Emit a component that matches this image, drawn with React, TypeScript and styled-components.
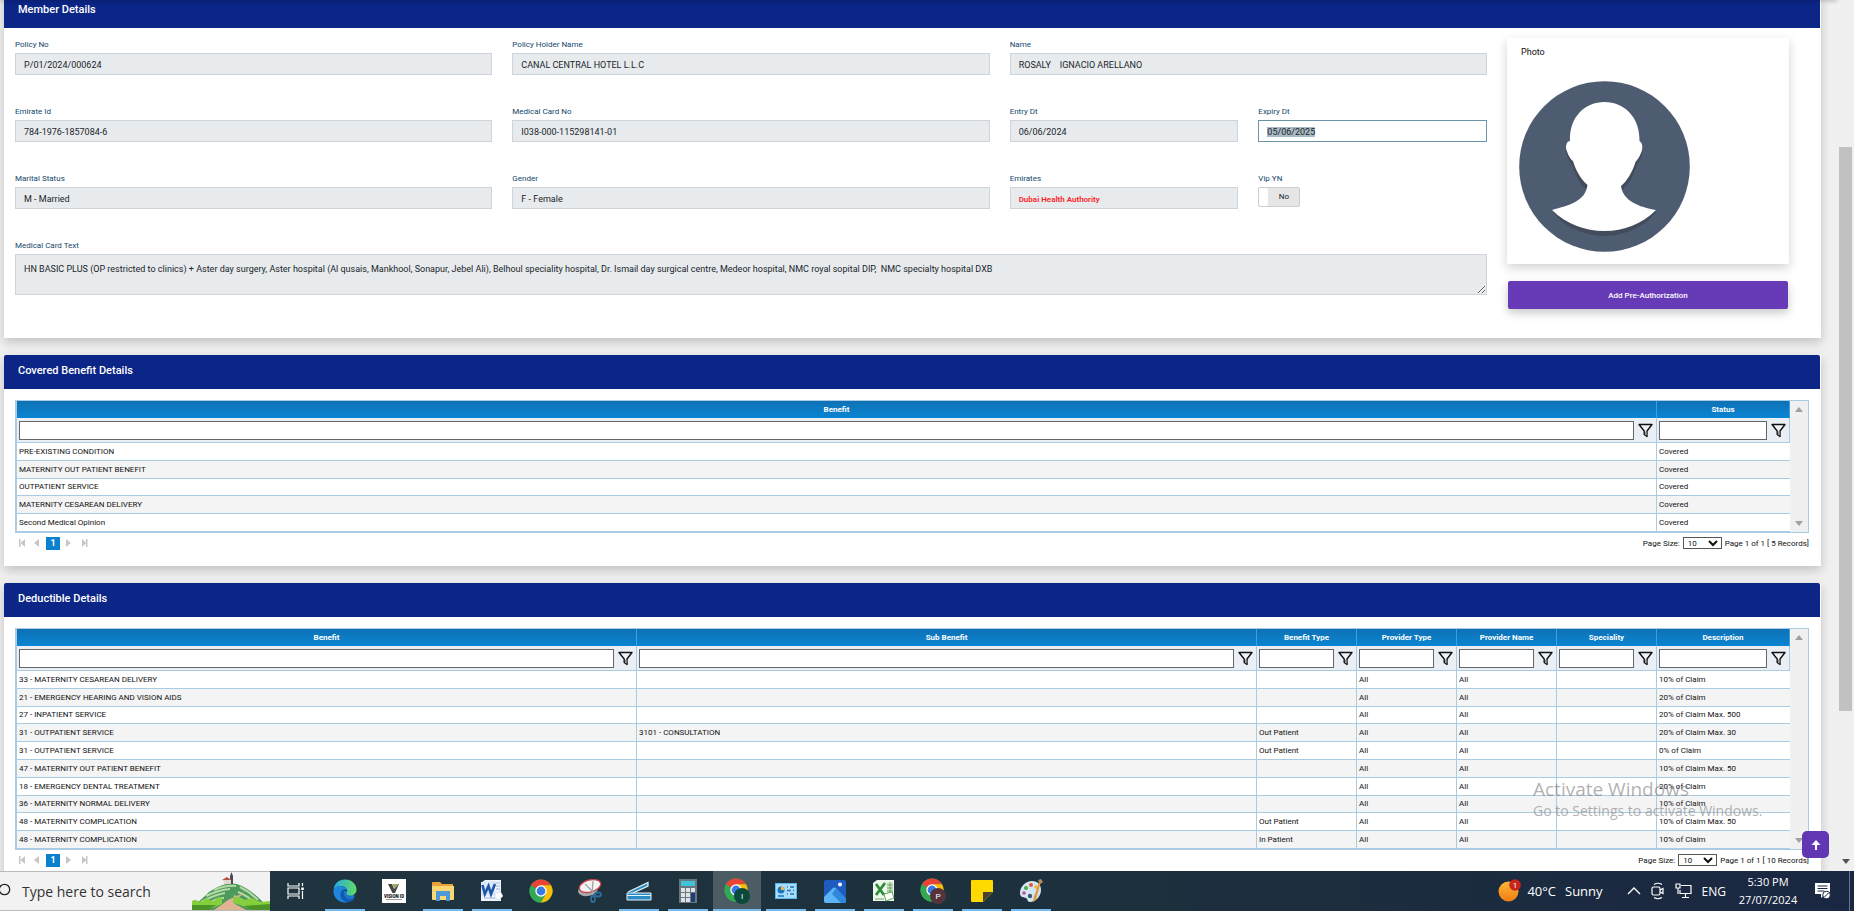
import React, { useEffect, useRef } from "react";
import styled, { createGlobalStyle, css } from "styled-components";

const GlobalStyle = createGlobalStyle`
  *, *::before, *::after { box-sizing: border-box; }
  body { margin: 0; font-family: Roboto, "Liberation Sans", sans-serif; color: #212529; }
  button, input, select, textarea { font: inherit; color: inherit; margin: 0; }
`;

const Desktop = styled.div`
  display: flex;
  flex-direction: column;
  height: 100vh;
  overflow: hidden;
`;

const Browser = styled.div`
  position: relative;
  display: flex;
  flex: 1;
  min-height: 0;
  background: #f0f0f0;
`;

const TopShade = styled.div`
  position: absolute;
  top: -4px;
  left: 0;
  right: 17px;
  height: 4px;
  box-shadow: 0 1px 4px rgba(0, 0, 0, 0.25);
`;

const Content = styled.main`
  flex: 1;
  min-width: 0;
  overflow: hidden;
  padding: 0 16px 0 4px;
`;

/* The page is scrolled, so the first card starts just above the window edge. */
const Cards = styled.div`
  display: flex;
  flex-direction: column;
  gap: 17px;
  margin-top: -6px;
`;

const Card = styled.section`
  background: #fff;
  box-shadow: 0 4px 10px rgba(0, 0, 0, 0.2);
`;

const CardTitle = styled.h2`
  display: flex;
  align-items: center;
  height: 34px;
  margin: 0 1px 0 0;
  padding: 0 14px 4px;
  border-radius: 2px 2px 0 0;
  background: #0c2687;
  color: #fff;
  font-size: 11px;
  font-weight: 500;
`;

const MemberBody = styled.div`
  display: flex;
  gap: 20px;
  padding: 9px 32px 29px 11px;
`;

const Form = styled.form`
  flex: 1;
  display: grid;
  grid-template-columns: repeat(6, 1fr);
  gap: 29px 20px;
  align-content: start;
`;

const FieldBox = styled.div<{ $span: number }>`
  grid-column: span ${(p) => p.$span};
  min-width: 0;
`;

const Label = styled.label`
  display: block;
  height: 16px;
  font-size: 8px;
  line-height: 16px;
  color: #13476b;
`;

const fieldLook = css`
  display: block;
  width: 100%;
  border: 1px solid #ced4da;
  border-radius: 0;
  background: #e7ebee;
  padding: 2px 8px 0;
  font-size: 9px;
  outline: none;
`;

const Input = styled.input<{ $alert?: boolean; $current?: boolean }>`
  ${fieldLook}
  height: 22px;
  ${(p) => p.$alert && css`color: #f22; font-weight: 600; font-size: 8px;`}
  ${(p) => p.$current && css`border-color: #6a93a8; background: #fff;`}
  &::selection { background: #a9bac4; color: #212529; }
`;

const TextArea = styled.textarea`
  ${fieldLook}
  height: 41px;
  padding-top: 8px;
  line-height: 12px;
  resize: vertical;
`;

const Toggle = styled.label`
  display: flex;
  width: 42px;
  height: 20px;
  border: 1px solid #ccc;
  border-radius: 2px;
  background: #e6e6e6;
  font-size: 8px;
  line-height: 18px;
  text-align: center;
`;

const ToggleInput = styled.input`
  appearance: none;
  width: 9px;
  height: 18px;
  border-radius: 2px;
  background: #fff;
`;

const ToggleText = styled.span`
  flex: 1;
`;

const Side = styled.aside`
  width: 282px;
  padding-top: 1px;
`;

const PhotoCard = styled.figure`
  height: 226px;
  margin: 0;
  padding: 7px 12px;
  background: #fff;
  box-shadow: 0 4px 10px rgba(0, 0, 0, 0.18);
`;

const PhotoCaption = styled.figcaption`
  padding-left: 2px;
  height: 36px;
  font-size: 9px;
  line-height: 14px;
  color: #111;
`;

const AddButton = styled.button`
  display: block;
  width: 280px;
  height: 28px;
  margin: 17px auto 0;
  border: 0;
  border-radius: 2px;
  background: #673ab7;
  color: #fff;
  font-size: 8px;
  font-weight: 500;
  box-shadow: 0 4px 10px rgba(0, 0, 0, 0.22);
`;

const GridBody = styled.div`
  padding: 11px 12px 13px 11px;
`;

const GridFrame = styled.div`
  display: flex;
  border: 1px solid #a9cbe4;
  border-left-width: 2px;
`;

const TableArea = styled.div`
  flex: 1;
  min-width: 0;
`;

const Table = styled.table<{ $height: number }>`
  width: 100%;
  height: ${(p) => p.$height}px;
  table-layout: fixed;
  border-collapse: separate;
  border-spacing: 0;
  font-size: 8px;
  line-height: 14px;
  color: #111;
`;

const Head = styled.th`
  height: 17px;
  padding: 0;
  border-right: 1px solid #3ba0e0;
  background: linear-gradient(#0f71b4, #0985d3);
  color: #fff;
  font-weight: 700;
`;

const FilterCell = styled.td`
  height: 25px;
  padding: 0;
  border-right: 1px solid #a9cbe4;
  border-bottom: 1px solid #a9cbe4;
  background: #e9eff5;
`;

const FilterBox = styled.div`
  display: flex;
  align-items: center;
  gap: 4px;
  padding: 0 3px 0 2px;
`;

const FilterInput = styled.input`
  flex: 1;
  min-width: 0;
  height: 19px;
  border: 1px solid #666;
  background: #fff;
`;

const IconButton = styled.button`
  display: flex;
  padding: 0;
  border: 0;
  background: none;
`;

const Cell = styled.td`
  padding: 1px 0 0 2px;
  border-right: 1px solid #a9cbe4;
  border-bottom: 1px solid #a9cbe4;
  white-space: nowrap;
  overflow: hidden;
  &:last-child { border-right: 0; }
`;

const Row = styled.tr`
  &:nth-child(even) { background: #f4f4f4; }
`;

const InnerScroll = styled.div`
  display: flex;
  flex-direction: column;
  justify-content: space-between;
  align-items: center;
  width: 18px;
  padding: 6px 0;
  background: #f0f0f0;
`;

const Pager = styled.div`
  display: flex;
  align-items: center;
  justify-content: space-between;
  height: 20px;
  font-size: 8px;
  color: #111;
`;

const PagerNav = styled.nav`
  display: flex;
  align-items: center;
  gap: 5px;
  padding-left: 3px;
`;

const PageNumber = styled.button`
  width: 14px;
  height: 13px;
  padding: 0;
  border: 0;
  background: #0a80ce;
  color: #fff;
  font-size: 9px;
  font-weight: 700;
  line-height: 13px;
`;

const PagerInfo = styled.div`
  display: flex;
  align-items: center;
  gap: 3px;
`;

const PageSize = styled.select`
  width: 39px;
  height: 12px;
  padding: 0;
  border: 1px solid #555;
  border-radius: 0;
  background: #fff;
  font-size: 8px;
`;

const PageScroll = styled.div`
  display: flex;
  flex-direction: column;
  align-items: center;
  width: 17px;
  background: #f0f0f0;
  padding-bottom: 7px;
`;

const ScrollGap = styled.div<{ $grow: number }>`
  flex: ${(p) => p.$grow};
`;

const Thumb = styled.div`
  flex: 564;
  width: 13px;
  background: #c1c1c1;
`;

const ToTop = styled.button`
  position: absolute;
  right: 25px;
  bottom: 13px;
  display: flex;
  align-items: center;
  justify-content: center;
  width: 27px;
  height: 27px;
  padding: 0;
  border: 0;
  border-radius: 5px;
  background: #6237b4;
`;

const Watermark = styled.div`
  position: absolute;
  right: 85px;
  bottom: 49px;
  width: 236px;
  font-family: "Open Sans", "Noto Sans", sans-serif;
  color: rgba(125, 125, 125, 0.6);
  font-size: 14px;
  line-height: 22px;
  white-space: nowrap;
  pointer-events: none;
`;

const WatermarkTitle = styled.div`
  font-size: 19px;
`;

const Taskbar = styled.footer`
  display: flex;
  height: 40px;
  background: linear-gradient(90deg, #20363f, #1d303d 60%, #1a2742);
  font-family: "Open Sans", "Noto Sans", sans-serif;
  color: #fff;
`;

const Search = styled.div`
  display: flex;
  align-items: center;
  width: 270px;
  border-top: 1px solid #bbb;
  border-bottom: 1px solid #bbb;
  background: #f2f2f2;
`;

const SearchInput = styled.input`
  flex: 1;
  min-width: 0;
  padding: 0 0 0 11px;
  border: 0;
  background: none;
  font-size: 14px;
  &::placeholder { color: #333; opacity: 1; }
`;

const Apps = styled.div`
  display: flex;
  gap: 1px;
  padding-left: 2px;
`;

const AppButton = styled.button<{ $open?: boolean; $active?: boolean }>`
  display: flex;
  align-items: center;
  justify-content: center;
  width: 48px;
  height: 40px;
  padding: 0;
  border: 0;
  background:
    ${(p) => (p.$open ? `linear-gradient(#76b9ed, #76b9ed) center bottom / ${p.$active ? 48 : 40}px 2px no-repeat` : "none")}
    ${(p) => (p.$active ? ", #4b5c64" : "")};
`;

const Tray = styled.div`
  display: flex;
  align-items: center;
  gap: 10px;
  margin-left: auto;
  padding-right: 4px;
  font-size: 12px;
`;

const Weather = styled.div`
  display: flex;
  align-items: center;
  gap: 5px;
  margin-right: 14px;
  font-size: 13px;
`;

const Conditions = styled.span`
  display: flex;
  gap: 9px;
`;

const Clock = styled.time`
  width: 60px;
  margin: 0 6px 0 2px;
  font-size: 11px;
  line-height: 18px;
  text-align: center;
`;

const ShowDesktop = styled.div`
  width: 1px;
  height: 40px;
  margin-left: 8px;
  background: #6d7688;
`;

/* ---------- drawings ---------- */

const Funnel = () => (
  <svg width="15" height="15" viewBox="0 0 15 15">
    <path d="M1 1.5h13L9 8v5.5L6.2 11.5V8z" fill="#eef3f7" stroke="#111" strokeWidth="1.4" strokeLinejoin="round" />
    <path d="M7 8.5h1.5v4.2L7 11.6z" fill="#999" />
  </svg>
);

const Arrow = ({ down, color = "#a0a0a0" }: { down?: boolean; color?: string }) => (
  <svg width="8" height="5" viewBox="0 0 8 5">
    <path d={down ? "M0 0h8L4 5z" : "M0 5h8L4 0z"} fill={color} />
  </svg>
);

const Step = ({ d }: { d: string }) => (
  <svg width="9" height="8" viewBox="0 0 9 8">
    <path d={d} fill="#c6c6c6" />
  </svg>
);

const Avatar = () => (
  <svg width="171" height="171" viewBox="0 0 171 171" display="block">
    <circle cx="85.5" cy="85.5" r="85.3" fill="#4d5c71" />
    <path
      d="M47 66C46 74 50 79 53 84C57 96 62 105 68 109L103 109C110 103 115 94 118 84C122 78 125 72 123 64zM33 129C40 142 62 155 85.5 155C109 155 131 142 138 129z"
      fill="#434c5c"
    />
    <path
      d="M51 60C50 36 66 21 85.5 21C105 21 121 36 120.5 60C124 62 124 68 122 72C120 77 118 79 116.5 81C113 92 108 100 102 105C104 120 120 126 137 129C123 143 105 150 85.5 150C66 150 47 143 33 129C50 124 66 121 68.5 104C62 98 57 90 54 80C52 79 49 74 47.5 69C46 65 48 60 51 60z"
      fill="#fff"
    />
  </svg>
);

const UpArrow = () => (
  <svg width="10" height="12" viewBox="0 0 10 12">
    <path d="M5 11V4" stroke="#fff" strokeWidth="2" />
    <path d="M.5 6L5 1l4.5 5z" fill="#fff" />
  </svg>
);

const SearchIcon = () => (
  <svg width="11" height="18" viewBox="0 0 11 18">
    <circle cx="4.5" cy="7.5" r="5.2" fill="none" stroke="#222" strokeWidth="1.3" />
  </svg>
);

const Landscape = () => (
  <svg width="78" height="38" viewBox="0 0 78 38">
    <path d="M5 31Q12 25 17 20Q26 14 34 12Q42 10 50 14Q62 20 72 31L76 38H4z" fill="#4e9a5d" />
    <path
      d="M9 30Q22 23 33 21M14 24Q26 18 38 17M22 18Q34 13 44 14M16 32Q24 26 32 26M48 15Q58 20 66 28M46 20Q56 24 63 31M42 24Q50 27 56 33"
      stroke="#b5d9a6" strokeWidth="2" fill="none"
    />
    <path d="M50 18C55 21 44 24 36 28C31 32 26 35 22 38H54C46 33 38 31 43 27C49 24 54 21 50 18z" fill="#e0b493" />
    <path d="M0 29q3-2 6 0t6-1t6 0t6-1t6 0v5L20 36H0z" fill="#86cf3c" />
    <path d="M41 26q4-3 7 0t8 1t8 1t14 1v8H60L42 31z" fill="#86cf3c" />
    <path d="M0 33h24l-8 5H0zM52 34l26-2v6H60z" fill="#4b9428" />
    <path d="M38 4l1.500-4L41 4v8h-3z" fill="#4c4a55" />
    <path d="M31 8l4-2 4 2v4h-7z" fill="#e3d5cb" />
    <path d="M30 8l5-3 4 3z" fill="#b7533f" />
  </svg>
);

const TaskView = () => (
  <svg width="18" height="18" viewBox="0 0 18 18" fill="none" stroke="#fff" strokeWidth="1.2">
    <path d="M1 1v3h11V1M1 17v-3h11v3M1 6h11v6H1zM15.500 1v3M15.500 9v8" />
    <path d="M14.2 5.500h2.600v2.600h-2.600z" fill="#fff" stroke="none" />
  </svg>
);

const Edge = () => (
  <svg width="24" height="24" viewBox="0 0 24 24">
    <defs>
      <linearGradient id="edgeTop" x1="0" x2="1"><stop offset="0" stopColor="#2aa7e8" /><stop offset="1" stopColor="#5fdc62" /></linearGradient>
    </defs>
    <path d="M.5 12a11.500 11.500 0 0 0 19 8.500L22 17l-8-5z" fill="#1b74cf" />
    <path d="M.6 11C1 4.500 6 .5 12 .5c7 0 11.500 5 11.500 10 0 4-3 6-6.500 6-2 0-4-1-3.500-2.500.8-1 1-2 .5-3.300C13 8 10 6.500 7 7 4 7.300 1.500 9 .6 11z" fill="url(#edgeTop)" />
    <path d="M.5 12C1 8.500 4 7 7 7c4 0 6.500 2 7 4-4-1-6.500 1-6.500 4.500 0 4 3 7 7.500 7.500C8 25 .5 20 .5 12z" fill="#1e86dc" />
    <path d="M10 10.500c-4 3-3.500 10 3 12.500 4 .5 7-1 9-4-4 2.500-10 1-11-3.500-.4-2 .2-3.800 1.500-5z" fill="#1559ae" />
  </svg>
);

const Vision = () => (
  <svg width="24" height="24" viewBox="0 0 24 24">
    <path d="M0 0h24v24H0z" fill="#fff" />
    <path d="M6 5h4l2 5 2-5h3l-4 9h-2.500z" fill="#444" />
    <path d="M10 5h7l-4.500 5z" fill="#9aae72" />
    <text x="12" y="19" textAnchor="middle" fontSize="4.500" fontWeight="900" fontFamily="Roboto, sans-serif" fill="#111">VISION ID</text>
    <path d="M4 20.500h16" stroke="#888" strokeWidth=".8" />
  </svg>
);

const Folder = () => (
  <svg width="22" height="20" viewBox="0 0 22 20">
    <path d="M0 2q0-1 1-1h7l2 2h11v4H0z" fill="#e8a33d" />
    <path d="M0 5h22v13q0 1-1 1H1q-1 0-1-1z" fill="#fbd774" />
    <path d="M4 10h14v10h-4v-5H8v5H4z" fill="#4a9ad9" />
  </svg>
);

const Word = () => (
  <svg width="22" height="22" viewBox="0 0 22 22">
    <path d="M4 0h16v21H0V3z" fill="#eef4fc" />
    <path d="M14 3h5M15 6h4M15 9h4M3 18h11" stroke="#9bb8df" />
    <path d="M0 2l14-1v15L0 16z" fill="#dbe8f8" />
    <path d="M1.500 5l2.300 9L7.500 6l2.500 8L14 4" stroke="#1e56a8" strokeWidth="2.600" fill="none" />
    <path d="M14 14l5-3 3 5-4 4-4-2z" fill="#fff" stroke="#b9cde6" strokeWidth=".6" />
  </svg>
);

const Chrome = ({ badge, color }: { badge?: string; color?: string }) => (
  <svg width="26" height="26" viewBox={badge ? "0 0 26 26" : "-1 -1 26 26"}>
    <circle cx="12" cy="12" r="11.5" fill="#34a853" />
    <path d="M12 12L2 6.200A11.500 11.500 0 0 1 22 6.300H12z" fill="#ea4335" />
    <path d="M12 6.300H22A11.500 11.500 0 0 1 11.800 23.500L17 14.800z" fill="#fbbc05" />
    <path d="M2 6.200A11.500 11.500 0 0 0 11.800 23.500L17 14.800 12 17l-5-2.300z" fill="#34a853" />
    <circle cx="12" cy="12" r="5.7" fill="#fff" />
    <circle cx="12" cy="12" r="4.4" fill="#3b78e7" />
    {badge && (
      <g>
        <circle cx="18" cy="18" r="8" fill={color} />
        <text x="18" y="21" textAnchor="middle" fontSize="8" fill="#fff" fontFamily="Roboto, sans-serif">{badge}</text>
      </g>
    )}
  </svg>
);

const Snip = () => (
  <svg width="24" height="24" viewBox="0 0 24 24">
    <ellipse cx="10" cy="11" rx="10" ry="6" transform="rotate(-12 10 11)" fill="#a9a9ad" />
    <ellipse cx="12" cy="7" rx="11" ry="6" transform="rotate(-15 12 7)" fill="#f6f3f3" stroke="#c9444c" strokeWidth="1.300" />
    <path d="M7 5l10 10M15 2l-1 14" stroke="#9aa6aa" strokeWidth="1.300" />
    <g fill="none" stroke="#2c6d9b" strokeWidth="1.800">
      <ellipse cx="20" cy="15.500" rx="3" ry="2" />
      <ellipse cx="15" cy="20" rx="2" ry="3" />
    </g>
  </svg>
);

const Scanner = () => (
  <svg width="26" height="20" viewBox="0 0 26 20">
    <path d="M2 11L22 1.500V5L7 12" fill="#2b8cc4" stroke="#e8f3fa" strokeWidth="1.200" />
    <path d="M1 12h24v7H1z" fill="#2b8cc4" stroke="#e8f3fa" />
    <path d="M1 14.500h24" stroke="#e8f3fa" />
  </svg>
);

const Calculator = () => (
  <svg width="18" height="24" viewBox="0 0 18 24">
    <path d="M0 0h18v24H0z" fill="#6a7680" />
    <path d="M2 2h14v5H2z" fill="#3fc4dc" />
    <path d="M2 9h4v4H2zM7 9h4v4H7zM12 9h4v4h-4zM2 14h4v4H2zM7 14h4v4H7zM2 19h4v4H2zM7 19h4v4H7z" fill="#dfe3e6" />
    <path d="M12 14h4v9h-4z" fill="#1c3f78" />
  </svg>
);

const ControlPanel = () => (
  <svg width="22" height="16" viewBox="0 0 22 16">
    <path d="M0 0h22v16H0z" fill="#58b7ee" />
    <path d="M1 1h20v14H1z" fill="#a7dcfa" />
    <circle cx="6" cy="7" r="3.5" fill="#1d74bf" />
    <path d="M6 7V3.500A3.500 3.500 0 0 1 9.500 7z" fill="#f6b63a" />
    <path d="M12 4h7M12 7.500h7M12 11h7M3 13h6" stroke="#1d74bf" strokeWidth="1.5" />
    <path d="M14 3v2M17 6.500v2M14 10v2" stroke="#fff" strokeWidth="1.5" />
  </svg>
);

const Photos = () => (
  <svg width="22" height="23" viewBox="0 0 22 23">
    <rect width="22" height="23" rx="2" fill="#1e5cc0" />
    <path d="M0 17L9 8q1.500-1 3 0l10 11v2q0 2-2 2H2q-2 0-2-2z" fill="#5cb6f5" />
    <path d="M12 8l10 11v2q0 2-2 2h-3L8 14z" fill="#2f87de" />
    <circle cx="16" cy="4.5" r="2" fill="#fff" />
  </svg>
);

const Excel = () => (
  <svg width="22" height="22" viewBox="0 0 22 22">
    <path d="M4 0h17v21H0V3z" fill="#eef7ec" />
    <path d="M14 2h6v12h-6z" fill="#cfe7ca" />
    <path d="M14 5h6M14 8h6M14 11h6M17 2v12M2 19h9" stroke="#6aa865" />
    <path d="M3 4l8 11M12 3L3 15" stroke="#2d8a35" strokeWidth="2.800" />
    <path d="M11 14l8-2 2 6-8 3z" fill="#fff" stroke="#5da55a" />
  </svg>
);

const Sticky = () => (
  <svg width="22" height="22" viewBox="0 0 22 22">
    <path d="M0 1q0-1 1-1h20q1 0 1 1v11L12 22H1q-1 0-1-1z" fill="#fdd900" />
    <path d="M12 12h10L12 22z" fill="#4b4233" />
  </svg>
);

const Paint = () => (
  <svg width="24" height="24" viewBox="0 0 24 24">
    <path d="M1 14C1 7 7 2 13 2c6 0 9 4 9 9 0 7-6 12-11 12-3 0-2-3-4-4-2-.8-6 0-6-5z" fill="#d3e6f3" />
    <circle cx="7" cy="9" r="2" fill="#4aa846" /><circle cx="12" cy="6" r="2" fill="#e5533d" />
    <circle cx="5" cy="14" r="1.8" fill="#c14fa0" /><circle cx="17" cy="8" r="1.8" fill="#f0b92c" />
    <circle cx="11" cy="17" r="2.2" fill="#3a5a70" />
    <path d="M20 3l1.500 1L17 21l-3 2 .5-4z" fill="#e09a45" />
    <path d="M19 1l3-1 2 3-3 2z" fill="#b98b5c" />
  </svg>
);

const Sun = () => (
  <svg width="24" height="24" viewBox="0 0 24 24">
    <defs>
      <linearGradient id="sun" x1="0" y1="0" x2="0" y2="1"><stop offset="0" stopColor="#fdb833" /><stop offset="1" stopColor="#f07d14" /></linearGradient>
    </defs>
    <circle cx="10.5" cy="12.5" r="10" fill="url(#sun)" />
    <circle cx="17" cy="6" r="5.8" fill="#c8251c" />
    <text x="17" y="9" textAnchor="middle" fontSize="8" fill="#fff" fontFamily="Roboto, sans-serif">1</text>
  </svg>
);

const Caret = () => (
  <svg width="14" height="8" viewBox="0 0 14 8"><path d="M1 7l6-6 6 6" stroke="#fff" strokeWidth="1.3" fill="none" /></svg>
);

const MeetNow = () => (
  <svg width="14" height="18" viewBox="0 0 14 18" fill="none" stroke="#fff" strokeWidth="1.2">
    <rect x="1" y="5" width="8" height="8" rx="1.5" /><path d="M9 8l3-1.500v5L9 10M3 2.500q4-2.500 8 0M3 15.500q4 2.500 8 0" />
  </svg>
);

const Network = () => (
  <svg width="17" height="16" viewBox="0 0 17 16" fill="none" stroke="#fff" strokeWidth="1.2">
    <path d="M6 2.500h10v8H5V7M7 14.500h7M10.500 10.500v4M1 1h4v4H1zM3 5v6" />
  </svg>
);

const Notifications = () => (
  <svg width="17" height="18" viewBox="0 0 17 18">
    <path d="M1 1h15v11h-5l-4 4v-4H1z" fill="#fff" />
    <path d="M3.500 4h10M3.500 6.500h10M3.500 9h7" stroke="#1a2742" strokeWidth="1.2" />
    <circle cx="12.5" cy="13" r="3.8" fill="#fff" stroke="#1a2742" /><path d="M10.500 15l4-4" stroke="#1a2742" />
  </svg>
);

/* ---------- page parts ---------- */

type FieldProps = { id: string; label: string; value: string; span: number; alert?: boolean; current?: boolean };

const Field = ({ id, label, value, span, alert, current }: FieldProps) => {
  const ref = useRef<HTMLInputElement>(null);
  useEffect(() => {
    if (current) {
      ref.current?.focus({ preventScroll: true });
      ref.current?.select();
    }
  }, [current]);
  return (
    <FieldBox $span={span}>
      <Label htmlFor={id}>{label}</Label>
      <Input ref={ref} id={id} readOnly={!current} defaultValue={value} $alert={alert} $current={current} />
    </FieldBox>
  );
};

type Column = { name: string; width?: number };

type GridProps = { id: string; columns: Column[]; rows: string[][]; height: number };

const DataGrid = ({ id, columns, rows, height }: GridProps) => (
  <GridBody>
    <GridFrame>
      <TableArea>
        <Table $height={height}>
          <colgroup>
            {columns.map((c) => <col key={c.name} width={c.width} />)}
          </colgroup>
          <thead>
            <tr>{columns.map((c) => <Head key={c.name} scope="col">{c.name}</Head>)}</tr>
            <tr>
              {columns.map((c) => (
                <FilterCell key={c.name}>
                  <FilterBox>
                    <FilterInput aria-label={`Filter ${c.name}`} />
                    <IconButton type="button" aria-label={`Filter options for ${c.name}`}><Funnel /></IconButton>
                  </FilterBox>
                </FilterCell>
              ))}
            </tr>
          </thead>
          <tbody>
            {rows.map((r, i) => (
              <Row key={i}>{r.map((v, j) => <Cell key={j}>{v}</Cell>)}</Row>
            ))}
          </tbody>
        </Table>
      </TableArea>
      <InnerScroll><Arrow /><Arrow down /></InnerScroll>
    </GridFrame>
    <Pager>
      <PagerNav aria-label="Pages">
        <IconButton aria-label="First page"><Step d="M1 0h1.500v8H1zM7 0v8L2.500 4z" /></IconButton>
        <IconButton aria-label="Previous page"><Step d="M7 0v8L2 4z" /></IconButton>
        <PageNumber>1</PageNumber>
        <IconButton aria-label="Next page"><Step d="M1 0v8l5-4z" /></IconButton>
        <IconButton aria-label="Last page"><Step d="M3 0v8l4.500-4zM7 0h1.500v8H7z" /></IconButton>
      </PagerNav>
      <PagerInfo>
        <label htmlFor={`${id}-size`}>Page Size:</label>
        <PageSize id={`${id}-size`} defaultValue="10"><option>10</option><option>20</option></PageSize>
        <span>Page 1 of 1 [ {rows.length} Records]</span>
      </PagerInfo>
    </Pager>
  </GridBody>
);

const coveredColumns: Column[] = [{ name: "Benefit" }, { name: "Status", width: 133 }];
const coveredRows = [
  ["PRE-EXISTING CONDITION", "Covered"],
  ["MATERNITY OUT PATIENT BENEFIT", "Covered"],
  ["OUTPATIENT SERVICE", "Covered"],
  ["MATERNITY CESAREAN DELIVERY", "Covered"],
  ["Second Medical Opinion", "Covered"],
];

const deductibleColumns: Column[] = [
  { name: "Benefit" },
  { name: "Sub Benefit" },
  { name: "Benefit Type", width: 100 },
  { name: "Provider Type", width: 100 },
  { name: "Provider Name", width: 100 },
  { name: "Speciality", width: 100 },
  { name: "Description", width: 133 },
];
const deductibleRows = [
  ["33 - MATERNITY CESAREAN DELIVERY", "", "", "All", "All", "", "10% of Claim"],
  ["21 - EMERGENCY HEARING AND VISION AIDS", "", "", "All", "All", "", "20% of Claim"],
  ["27 - INPATIENT SERVICE", "", "", "All", "All", "", "20% of Claim Max. 500"],
  ["31 - OUTPATIENT SERVICE", "3101 - CONSULTATION", "Out Patient", "All", "All", "", "20% of Claim Max. 30"],
  ["31 - OUTPATIENT SERVICE", "", "Out Patient", "All", "All", "", "0% of Claim"],
  ["47 - MATERNITY OUT PATIENT BENEFIT", "", "", "All", "All", "", "10% of Claim Max. 50"],
  ["18 - EMERGENCY DENTAL TREATMENT", "", "", "All", "All", "", "20% of Claim"],
  ["36 - MATERNITY NORMAL DELIVERY", "", "", "All", "All", "", "10% of Claim"],
  ["48 - MATERNITY COMPLICATION", "", "Out Patient", "All", "All", "", "10% of Claim Max. 50"],
  ["48 - MATERNITY COMPLICATION", "", "In Patient", "All", "All", "", "10% of Claim"],
];

const apps: { name: string; icon: React.ReactNode; open?: boolean; active?: boolean }[] = [
  { name: "Task View", icon: <TaskView /> },
  { name: "Edge", icon: <Edge />, open: true },
  { name: "Vision ID", icon: <Vision /> },
  { name: "File Explorer", icon: <Folder />, open: true },
  { name: "Word", icon: <Word />, open: true },
  { name: "Chrome", icon: <Chrome /> },
  { name: "Snipping Tool", icon: <Snip /> },
  { name: "Scanner", icon: <Scanner />, open: true },
  { name: "Calculator", icon: <Calculator />, open: true },
  { name: "Chrome, profile I", icon: <Chrome badge="I" color="#0b4a3a" />, open: true, active: true },
  { name: "Control Panel", icon: <ControlPanel />, open: true },
  { name: "Photos", icon: <Photos />, open: true },
  { name: "Excel", icon: <Excel />, open: true },
  { name: "Chrome, profile P", icon: <Chrome badge="P" color="#54343a" />, open: true },
  { name: "Sticky Notes", icon: <Sticky />, open: true },
  { name: "Paint", icon: <Paint />, open: true },
];

export default function App() {
  return (
    <Desktop>
      <GlobalStyle />
      <Browser>
        <Content>
          <Cards>
            <Card>
              <CardTitle>Member Details</CardTitle>
              <MemberBody>
                <Form>
                  <Field id="policy" label="Policy No" value="P/01/2024/000624" span={2} />
                  <Field id="holder" label="Policy Holder Name" value="CANAL CENTRAL HOTEL L.L.C" span={2} />
                  <Field id="name" label="Name" value="ROSALY    IGNACIO ARELLANO" span={2} />
                  <Field id="emirate" label="Emirate Id" value="784-1976-1857084-6" span={2} />
                  <Field id="card" label="Medical Card No" value="I038-000-115298141-01" span={2} />
                  <Field id="entry" label="Entry Dt" value="06/06/2024" span={1} />
                  <Field id="expiry" label="Expiry Dt" value="05/06/2025" span={1} current />
                  <Field id="marital" label="Marital Status" value="M - Married" span={2} />
                  <Field id="gender" label="Gender" value="F - Female" span={2} />
                  <Field id="emirates" label="Emirates" value="Dubai Health Authority" span={1} alert />
                  <FieldBox $span={1}>
                    <Label htmlFor="vip">Vip YN</Label>
                    <Toggle>
                      <ToggleInput id="vip" type="checkbox" />
                      <ToggleText>No</ToggleText>
                    </Toggle>
                  </FieldBox>
                  <FieldBox $span={6}>
                    <Label htmlFor="cardtext">Medical Card Text</Label>
                    <TextArea
                      id="cardtext"
                      readOnly
                      defaultValue="HN BASIC PLUS (OP restricted to clinics) + Aster day surgery, Aster hospital (Al qusais, Mankhool, Sonapur, Jebel Ali), Belhoul speciality hospital, Dr. Ismail day surgical centre, Medeor hospital, NMC royal sopital DIP,  NMC specialty hospital DXB"
                    />
                  </FieldBox>
                </Form>
                <Side>
                  <PhotoCard>
                    <PhotoCaption>Photo</PhotoCaption>
                    <Avatar />
                  </PhotoCard>
                  <AddButton type="button">Add Pre-Authorization</AddButton>
                </Side>
              </MemberBody>
            </Card>
            <Card>
              <CardTitle>Covered Benefit Details</CardTitle>
              <DataGrid id="covered" columns={coveredColumns} rows={coveredRows} height={131} />
            </Card>
            <Card>
              <CardTitle>Deductible Details</CardTitle>
              <DataGrid id="deductible" columns={deductibleColumns} rows={deductibleRows} height={220} />
            </Card>
          </Cards>
        </Content>
        <PageScroll>
          <ScrollGap $grow={147} />
          <Thumb />
          <ScrollGap $grow={148} />
          <Arrow down color="#555" />
        </PageScroll>
        <TopShade />
        <ToTop type="button" aria-label="Back to top"><UpArrow /></ToTop>
        <Watermark>
          <WatermarkTitle>Activate Windows</WatermarkTitle>
          Go to Settings to activate Windows.
        </Watermark>
      </Browser>
      <Taskbar>
        <Search>
          <SearchIcon />
          <SearchInput aria-label="Search" placeholder="Type here to search" />
          <Landscape />
        </Search>
        <Apps>
          {apps.map((a) => (
            <AppButton key={a.name} type="button" aria-label={a.name} $open={a.open} $active={a.active}>{a.icon}</AppButton>
          ))}
        </Apps>
        <Tray>
          <Weather>
            <Sun />
            <Conditions><span>40°C</span><span>Sunny</span></Conditions>
          </Weather>
          <Caret />
          <MeetNow />
          <Network />
          <span>ENG</span>
          <Clock>5:30 PM<br />27/07/2024</Clock>
          <Notifications />
          <ShowDesktop />
        </Tray>
      </Taskbar>
    </Desktop>
  );
}
